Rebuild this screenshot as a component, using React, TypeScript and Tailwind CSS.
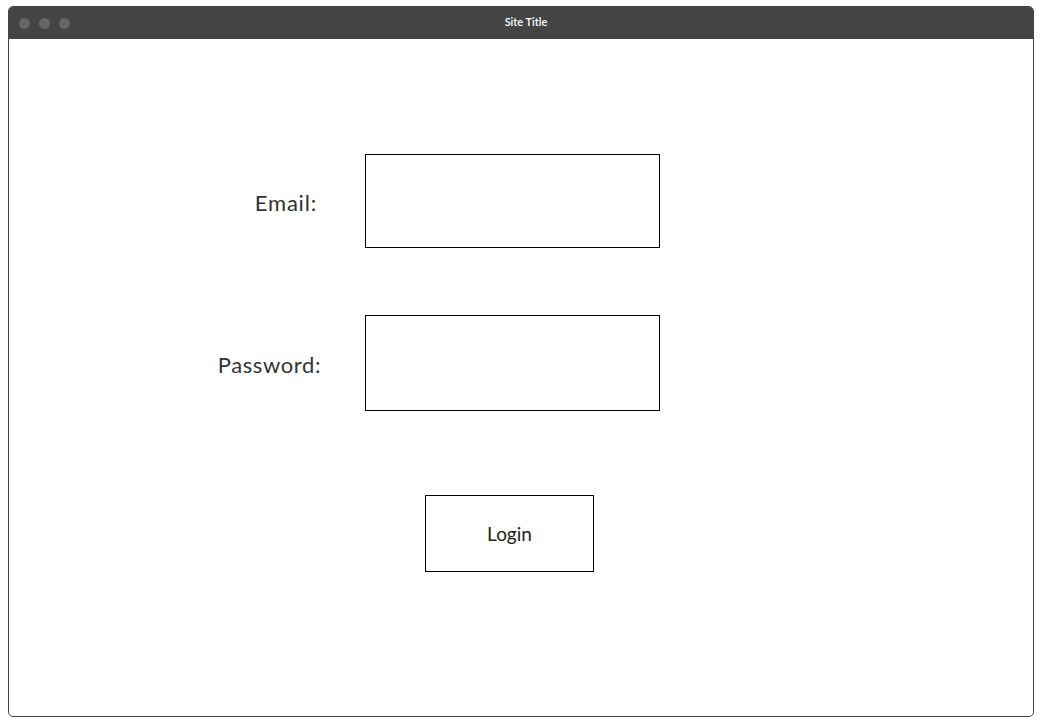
export default function App() {
  return (
    <div className="w-[1042px] h-[728px] bg-white pt-[6px] pl-[8px]" style={{ fontFamily: '"Lato", "Noto Sans", sans-serif' }}>
      <div className="w-[1026px] h-[711px] rounded-[5px] border border-[#444] flex flex-col overflow-hidden">
        <div className="h-[32px] bg-[#444] flex items-center relative shrink-0">
          <div className="flex gap-[9px] pl-[10px]">
            <div className="w-[11px] h-[11px] rounded-full bg-[#666]" />
            <div className="w-[11px] h-[11px] rounded-full bg-[#666]" />
            <div className="w-[11px] h-[11px] rounded-full bg-[#666]" />
          </div>
          <div className="absolute inset-0 flex items-center justify-center pl-[10px] pb-[1px] text-white text-[11px] font-semibold">Site Title</div>
        </div>
        <div className="flex-1 flex flex-col pt-[115px]">
          <div className="flex items-center">
            <div className="w-[308px] text-right text-[22px] tracking-[0.8px] text-[#333] pt-[2px]">Email:</div>
            <div className="ml-[48px] w-[295px] h-[94px] border border-black" />
          </div>
          <div className="flex items-center mt-[67px]">
            <div className="w-[312px] text-right text-[22px] tracking-[0.6px] text-[#333] pt-[2px]">Password:</div>
            <div className="ml-[44px] w-[295px] h-[96px] border border-black" />
          </div>
          <div className="flex mt-[84px] pl-[416px]">
            <div className="w-[169px] h-[77px] border border-black flex items-center justify-center pt-[2px] text-[19px] text-[#222]">Login</div>
          </div>
        </div>
      </div>
    </div>
  );
}
